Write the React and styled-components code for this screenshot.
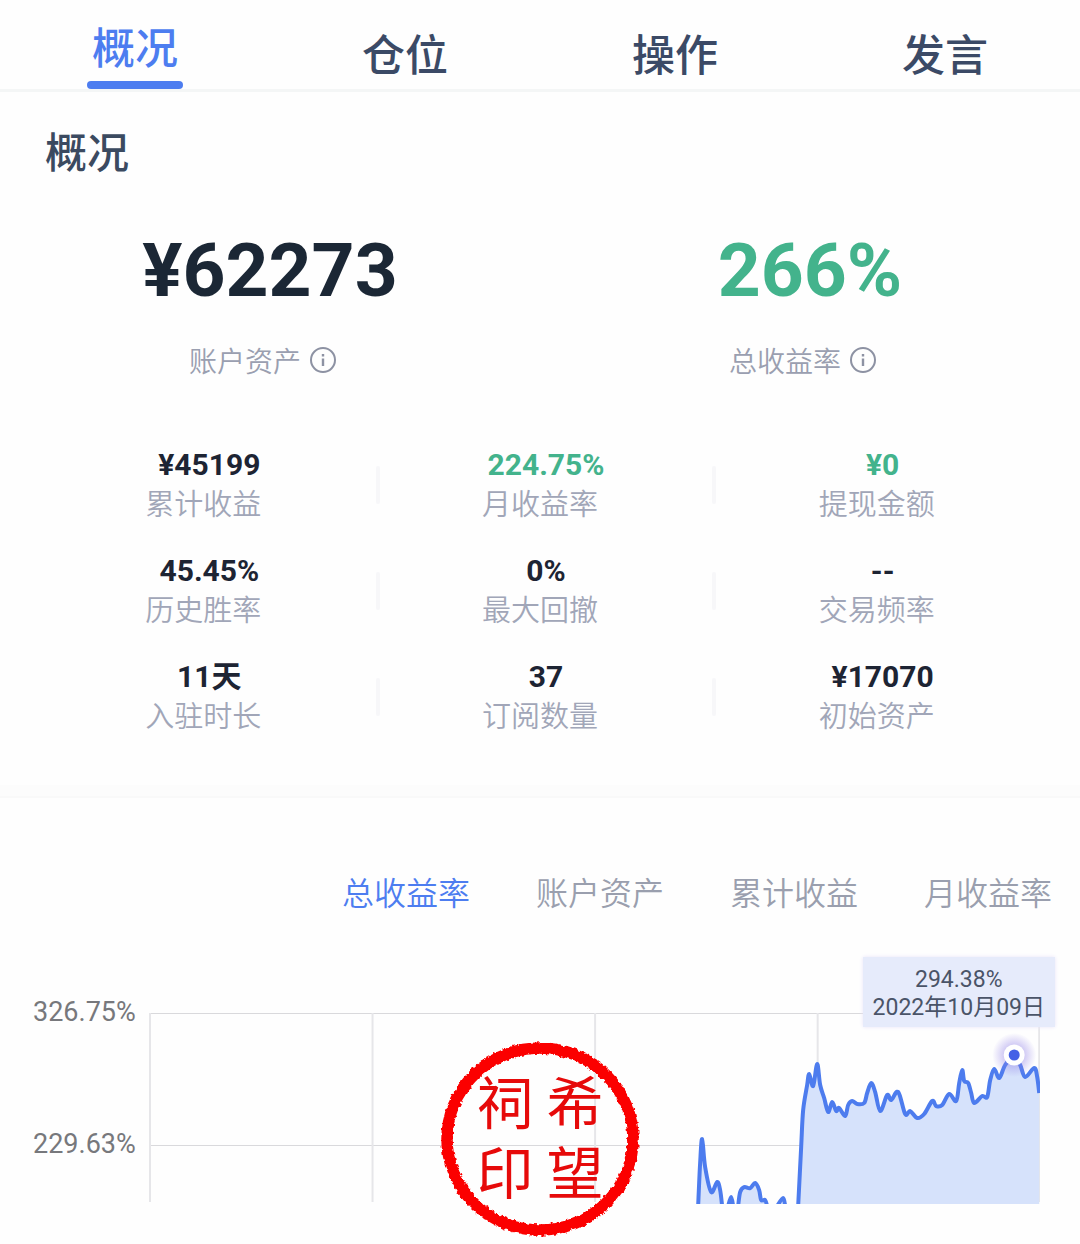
import React, { useState } from 'react';
import styled, { createGlobalStyle } from 'styled-components';

const GlobalStyle = createGlobalStyle`
  body {
    margin: 0;
    background: #fefefe;
    font-family: Roboto, 'Noto Sans CJK SC', sans-serif;
  }

  button {
    margin: 0;
    padding: 0;
    border: 0;
    background: none;
    font-family: inherit;
    cursor: pointer;
  }
`;

const TabBar = styled.nav`
  display: grid;
  grid-template-columns: repeat(4, 1fr);
  border-bottom: 3px solid #f4f6f6;
`;

const Tab = styled.button`
  display: flex;
  flex-direction: column;
  align-items: center;
  justify-content: flex-end;
  gap: 7px;
  height: 89px;
  padding-bottom: ${props => (props.$active ? 0 : 8)}px;
  color: ${props => (props.$active ? '#4d7df0' : '#3b4a66')};
  font-size: 43px;
  font-weight: 500;
  line-height: 50px;
`;

const TabMarker = styled.span`
  width: 96px;
  height: 8px;
  border-radius: 4px;
  background: #4d7df0;
`;

const Overview = styled.section`
  padding-bottom: 48px;
`;

const Title = styled.h2`
  margin: 0;
  padding: 37px 45px 0;
  color: #3b4a60;
  font-size: 42px;
  font-weight: 500;
  line-height: 50px;
`;

const Headline = styled.div`
  display: grid;
  grid-template-columns: 1fr 1fr;
  padding-top: 51px;
`;

const HeadlineItem = styled.div`
  display: flex;
  flex-direction: column;
  align-items: center;
  gap: 30px;
`;

const HeadlineValue = styled.div`
  color: ${props => (props.$up ? '#43b38c' : '#1b2735')};
  font-size: 75px;
  font-weight: 700;
  line-height: 80px;
`;

const HeadlineLabel = styled.div`
  display: flex;
  align-items: center;
  gap: 8px;
  padding-right: 14px;
  color: #9a9fb0;
  font-family: 'Noto Sans CJK SC', sans-serif;
  font-size: 28px;
  font-weight: 350;
  line-height: 40px;
`;

const InfoButton = styled.button`
  display: flex;
  color: #8d92a3;
`;

const Stats = styled.div`
  display: grid;
  grid-template-columns: repeat(3, 1fr);
  row-gap: 26px;
  padding: 65px 27px 0 43px;
`;

const Stat = styled.div`
  display: flex;
  align-items: center;
`;

const StatText = styled.div`
  flex: 1;
  text-align: center;
`;

const StatValue = styled.div`
  color: ${props => (props.$up ? '#43b38c' : '#1d2433')};
  font-size: 30px;
  font-weight: 700;
  line-height: 40px;
`;

const StatLabel = styled.div`
  padding-right: 12px;
  color: #a1a6b8;
  font-size: 29px;
  font-weight: 350;
  line-height: 40px;
`;

const StatDivider = styled.span`
  width: 4px;
  height: 38px;
  border-radius: 2px;
  background: ${props => (props.$hidden ? 'transparent' : '#f7f7f9')};
`;

const SectionGap = styled.div`
  height: 11px;
  border-bottom: 2px solid #f9f9f9;
  background: #fcfcfc;
`;

const ChartSection = styled.section`
  position: relative;
  padding-bottom: 40px;
`;

const ChartTabs = styled.div`
  display: flex;
  justify-content: flex-end;
  gap: 66px;
  padding: 76px 28px 0;
`;

const ChartTab = styled.button`
  color: ${props => (props.$active ? '#4d7df0' : '#9a9fae')};
  font-size: 32px;
  font-weight: 350;
  line-height: 40px;
`;

const ChartBody = styled.div`
  display: flex;
  gap: 13px;
  padding: 98px 40px 0 33px;
`;

const Axis = styled.div`
  display: flex;
  flex-direction: column;
  gap: 92px;
  margin-top: -20px;
  color: #77787c;
  font-size: 27px;
  line-height: 40px;
`;

const Plot = styled.div`
  position: relative;
  flex: 1;
`;

const PlotSvg = styled.svg`
  display: block;
  width: 100%;
`;

const Tooltip = styled.div`
  position: absolute;
  top: -55px;
  right: -15px;
  padding: 9px 10px 5px;
  background: #e6ebfb;
  box-shadow: 0 0 4px #e9e4fa;
  color: #4a5468;
  font-size: 23px;
  line-height: 28px;
  text-align: center;
`;

const Seal = styled.div`
  position: absolute;
  right: 0;
  bottom: 4px;
  left: 0;
  display: grid;
  width: 204px;
  height: 204px;
  margin: 0 auto;
`;

const SealRing = styled.svg`
  grid-area: 1 / 1;
`;

const SealText = styled.div`
  grid-area: 1 / 1;
  display: grid;
  grid-template-columns: 70px 70px;
  place-content: center;
  padding-top: 4px;
  color: #e60a0a;
  font-size: 57px;
  font-weight: 400;
  line-height: 70px;
  text-align: center;
`;

const tabs = ['概况', '仓位', '操作', '发言'];
const chartTabs = ['总收益率', '账户资产', '累计收益', '月收益率'];

const stats = [
  { value: '¥45199', label: '累计收益' },
  { value: '224.75%', label: '月收益率', up: true },
  { value: '¥0', label: '提现金额', up: true },
  { value: '45.45%', label: '历史胜率' },
  { value: '0%', label: '最大回撤' },
  { value: '--', label: '交易频率' },
  { value: '11天', label: '入驻时长' },
  { value: '37', label: '订阅数量' },
  { value: '¥17070', label: '初始资产' },
];

// the curve dips under the visible range, so it comes in pieces
const series = [
  [[549, 194], [551, 151], [553, 127], [556, 155], [562, 180], [568, 170], [571, 178], [573, 194]],
  [[579, 194], [582, 185], [584, 194]],
  [[589, 194], [591, 180], [595, 175], [601, 176], [606, 171], [610, 178], [612, 188], [616, 188], [618, 194]],
  [[628, 194], [634, 186], [636, 194]],
  [
    [649, 194], [652, 135], [654, 98], [658, 73], [660, 62], [664, 74], [668, 52], [671, 73],
    [675, 86], [679, 100], [683, 90], [687, 99], [690, 96], [696, 104], [699, 93], [703, 89],
    [708, 92], [715, 91], [718, 81], [722, 71], [726, 80], [731, 99], [738, 83], [742, 88],
    [749, 80], [756, 102], [761, 99], [768, 106], [775, 102], [783, 89], [787, 94], [793, 93],
    [800, 82], [807, 89], [810, 71], [813, 58], [815, 69], [819, 71], [822, 81], [825, 91],
    [833, 84], [838, 85], [841, 68], [845, 57], [850, 66], [856, 53], [865, 43], [871, 53],
    [876, 65], [885, 56], [888, 65], [890, 81],
  ],
];

function smooth(points) {
  let d = `M${points[0]}`;
  for (let i = 0; i < points.length - 1; i += 1) {
    const a = points[i - 1] || points[i];
    const b = points[i];
    const c = points[i + 1];
    const e = points[i + 2] || c;
    d += `C${b[0] + (c[0] - a[0]) / 6},${b[1] + (c[1] - a[1]) / 6}`;
    d += ` ${c[0] - (e[0] - b[0]) / 6},${c[1] - (e[1] - b[1]) / 6} ${c}`;
  }
  return d;
}

function InfoIcon() {
  return (
    <svg width="28" height="28" viewBox="0 0 28 28" fill="none" stroke="currentColor" strokeWidth="2">
      <circle cx="14" cy="14" r="12" />
      <path d="M14 12.5v7.5M14 8v2.5" strokeWidth="2.4" />
    </svg>
  );
}

function Metric({ value, label, up }) {
  return (
    <HeadlineItem>
      <HeadlineValue $up={up}>{value}</HeadlineValue>
      <HeadlineLabel>
        {label}
        <InfoButton type="button" aria-label={label}>
          <InfoIcon />
        </InfoButton>
      </HeadlineLabel>
    </HeadlineItem>
  );
}

function Chart() {
  return (
    <PlotSvg viewBox="0 0 891 192">
      <defs>
        <radialGradient id="glow">
          <stop offset="0.4" stopColor="#8f7fe6" stopOpacity="0.45" />
          <stop offset="1" stopColor="#8f7fe6" stopOpacity="0" />
        </radialGradient>
      </defs>
      <path d="M1 1.5H890M1 133.5H890" stroke="#d9d9dc" />
      <path d="M1 1V190M223.5 1V190M446 1V190M668.5 1V190M890 1V190" stroke="#e6e6e9" strokeWidth="2" />
      {series.map(points => (
        <g key={points[0][0]}>
          <path d={`${smooth(points)}V194H${points[0][0]}Z`} fill="#d6e2fb" />
          <path d={smooth(points)} fill="none" stroke="#4d7cee" strokeWidth="4" strokeLinejoin="round" />
        </g>
      ))}
      <circle cx="865" cy="43" r="22" fill="url(#glow)" />
      <circle cx="865" cy="43" r="10.5" fill="#fff" />
      <circle cx="865" cy="43" r="5.5" fill="#4561e6" />
    </PlotSvg>
  );
}

function Stamp() {
  return (
    <Seal>
      <SealRing width="204" height="204" viewBox="0 0 204 204">
        <filter id="rough" x="-5%" y="-5%" width="110%" height="110%">
          <feTurbulence type="fractalNoise" baseFrequency="0.25" numOctaves="2" seed="4" />
          <feDisplacementMap in="SourceGraphic" scale="5" xChannelSelector="R" yChannelSelector="G" />
        </filter>
        <ellipse cx="102" cy="103" rx="93" ry="91" fill="none" stroke="#fb0303" strokeWidth="11.5" filter="url(#rough)" />
      </SealRing>
      <SealText>
        <span>祠</span>
        <span>希</span>
        <span>印</span>
        <span>望</span>
      </SealText>
    </Seal>
  );
}

export default function App() {
  const [tab, setTab] = useState(tabs[0]);
  const [chartTab, setChartTab] = useState(chartTabs[0]);

  return (
    <main>
      <GlobalStyle />
      <TabBar>
        {tabs.map(name => (
          <Tab key={name} type="button" $active={name === tab} onClick={() => setTab(name)}>
            {name}
            {name === tab && <TabMarker />}
          </Tab>
        ))}
      </TabBar>
      <Overview>
        <Title>概况</Title>
        <Headline>
          <Metric value="¥62273" label="账户资产" />
          <Metric value="266%" label="总收益率" up />
        </Headline>
        <Stats>
          {stats.map((stat, i) => (
            <Stat key={stat.label}>
              <StatText>
                <StatValue $up={stat.up}>{stat.value}</StatValue>
                <StatLabel>{stat.label}</StatLabel>
              </StatText>
              <StatDivider $hidden={i % 3 === 2} />
            </Stat>
          ))}
        </Stats>
      </Overview>
      <SectionGap />
      <ChartSection>
        <ChartTabs>
          {chartTabs.map(name => (
            <ChartTab key={name} type="button" $active={name === chartTab} onClick={() => setChartTab(name)}>
              {name}
            </ChartTab>
          ))}
        </ChartTabs>
        <ChartBody>
          <Axis>
            <span>326.75%</span>
            <span>229.63%</span>
          </Axis>
          <Plot>
            <Chart />
            <Tooltip>
              <div>294.38%</div>
              <div>2022年10月09日</div>
            </Tooltip>
          </Plot>
        </ChartBody>
        <Stamp />
      </ChartSection>
    </main>
  );
}
